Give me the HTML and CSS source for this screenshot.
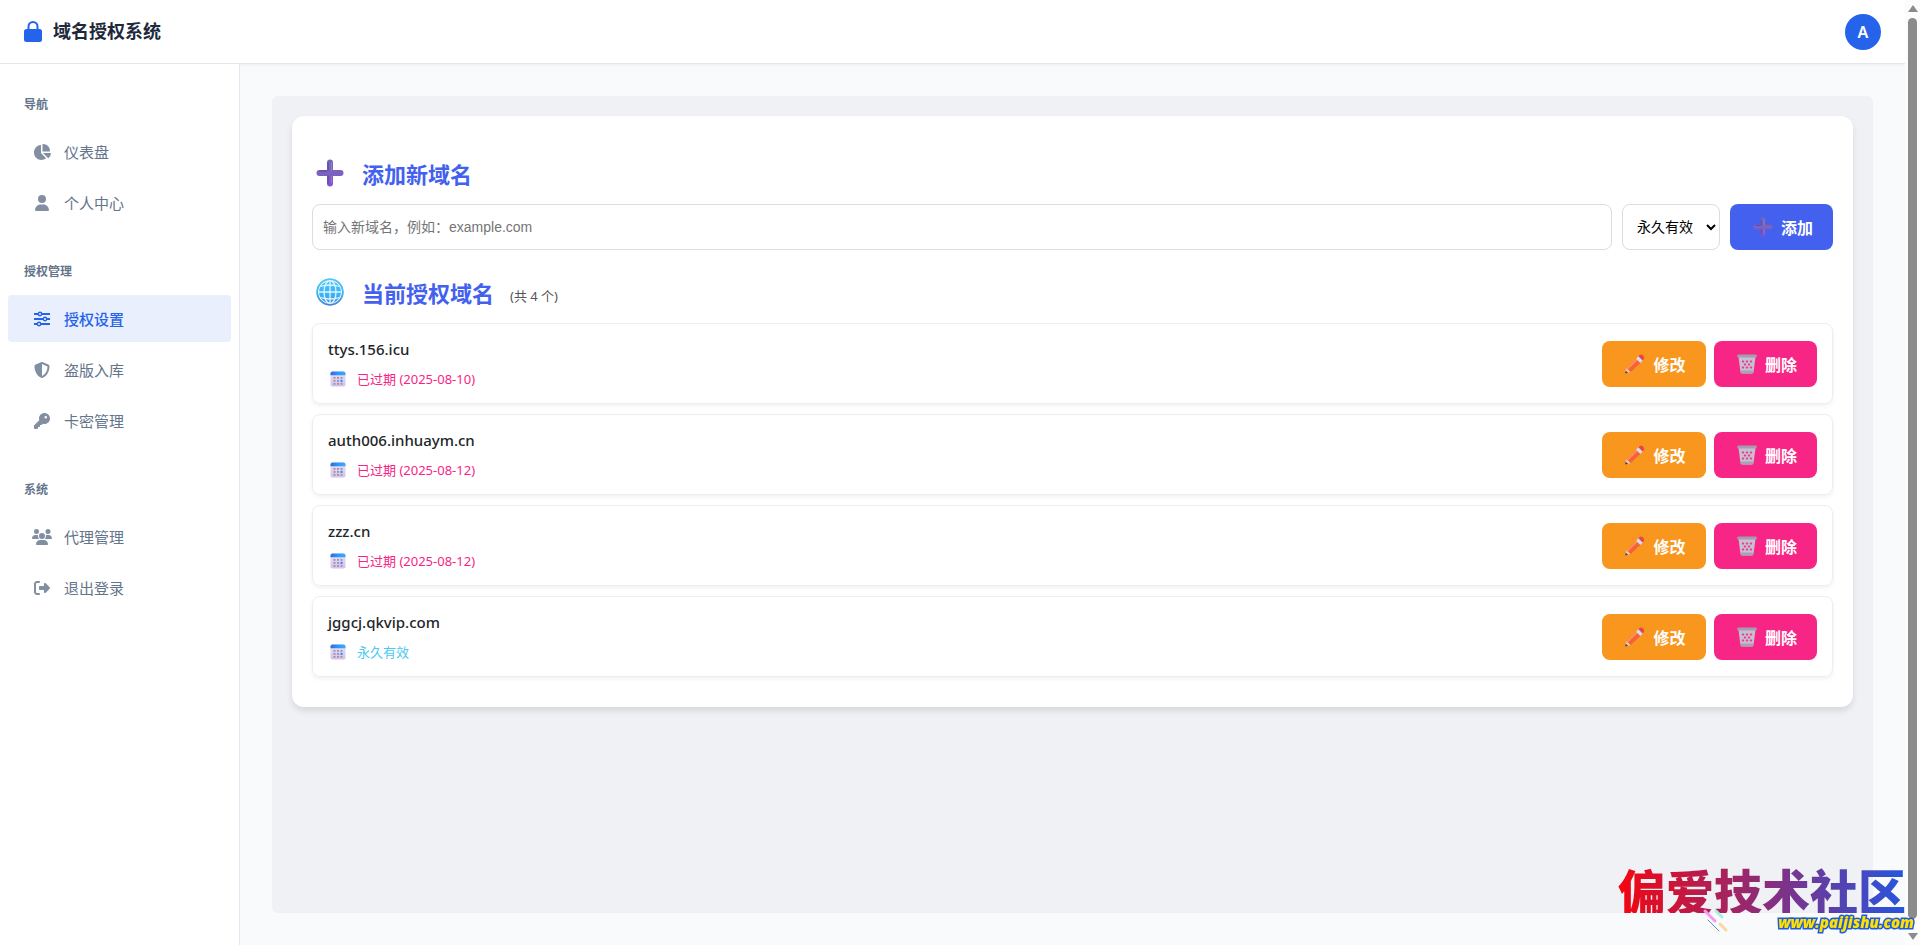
FILE: index.html
```html
<!DOCTYPE html>
<html lang="zh-CN">
<head>
    <meta charset="UTF-8">
    <meta name="viewport" content="width=device-width, initial-scale=1.0">
    <title>域名授权系统</title>
    <link rel="stylesheet" href="styles.css">
</head>
<body>
    <!-- 图标 -->
    <svg class="sprite" aria-hidden="true">
        <defs>
            <linearGradient id="g-plus" x1="0" y1="0" x2="0" y2="1">
                <stop offset="0" stop-color="#7468ae"/>
                <stop offset="0.5" stop-color="#7c62bd"/>
                <stop offset="1" stop-color="#8450d4"/>
            </linearGradient>
            <linearGradient id="g-globe" x1="0" y1="0" x2="0" y2="1">
                <stop offset="0" stop-color="#4fc9fb"/>
                <stop offset="0.6" stop-color="#3db2f5"/>
                <stop offset="1" stop-color="#4a86d4"/>
            </linearGradient>
            <linearGradient id="g-cal" x1="0" y1="0" x2="1" y2="0">
                <stop offset="0" stop-color="#2f6be0"/>
                <stop offset="0.5" stop-color="#2e97fb"/>
                <stop offset="1" stop-color="#35acff"/>
            </linearGradient>
            <linearGradient id="g-page" x1="0" y1="0" x2="0" y2="1">
                <stop offset="0" stop-color="#e9e3f2"/>
                <stop offset="1" stop-color="#d6c0ea"/>
            </linearGradient>
        </defs>
        <symbol id="plus" viewBox="0 0 28 28">
            <path fill="url(#g-plus)" d="M11 3.500a3 3 0 0 1 6 0V11h7.500a3 3 0 0 1 0 6H17v7.500a3 3 0 0 1-6 0V17H3.500a3 3 0 0 1 0-6H11z"/>
            <path fill="none" stroke="#5b3aa0" stroke-opacity=".6" stroke-width="1.500" d="M12 3.500V11.500M12 16.500v8M3.500 12h7.500"/>
            <path fill="none" stroke="#9b8bd0" stroke-opacity=".7" d="M15.500 3v9M15.500 17v7"/>
        </symbol>
        <symbol id="globe" viewBox="0 0 28 28">
            <circle cx="14" cy="14" r="13.500" fill="url(#g-globe)"/>
            <g fill="none" stroke="#dff5ff" stroke-width="1.300">
                <circle cx="14" cy="14" r="11.500"/>
                <ellipse cx="14" cy="14" rx="6" ry="11.500"/>
                <path d="M14 2.500v23M2.500 14h23M4.500 8.500q9.500-3 19 0M4.500 19.500q9.500 3 19 0"/>
            </g>
            <circle cx="14" cy="14" r="12.800" fill="none" stroke="url(#g-globe)" stroke-width="1.600"/>
        </symbol>
        <symbol id="calendar" viewBox="0 0 16 16">
            <rect x="0.500" y="0.500" width="15" height="15" rx="2" fill="url(#g-page)"/>
            <path fill="url(#g-cal)" d="M.5 4.200V2.500a2 2 0 0 1 2-2h11a2 2 0 0 1 2 2v1.700z"/>
            <path fill="#9a93ac" d="M3.500 6h2v1.800h-2zM7 6h2v1.800H7zM10.500 6h2v1.800h-2zM3.500 9h2v1.800h-2zM7 9h2v1.800H7zM3.500 12h2v1.800h-2zM7 12h2v1.800H7zM10.500 12h2v1.800h-2z"/>
            <path fill="#2c8df5" d="M10.500 8.800h2v2.200h-2z"/>
        </symbol>
        <symbol id="pencil" viewBox="0 0 20 20">
            <path fill="#f5c9a0" d="M1.500 14l-1.300 4.500q-.2 1 .8.900L5.700 18z"/>
            <path fill="#5a3b5c" d="M.8 16.700l-.7 2q-.1.900.8.700l2.200-.7z"/>
            <path fill="#f4613c" d="M1.500 14L11.500 4.200l4.300 4.200L5.700 18z"/>
            <path fill="#ff9150" d="M1.500 14L11.500 4.200l1.500 1.500L3 15.500z"/>
            <path fill="#d9d9ef" d="M11 4.700l2.500-2.400 4.300 4.200-2.500 2.400z"/>
            <path fill="#e8464f" d="M13.500 2.300l1.200-1.200q1.600-1.200 3.300.400t.8 3.500l-1.200 1.500z"/>
        </symbol>
        <symbol id="trash" viewBox="0 0 20 20">
            <path fill="#c7c0d3" d="M1.500 3h17l-2 15q-.2 1.500-2 1.500h-9q-1.800 0-2-1.500z"/>
            <path fill="#ee3d90" d="M6 6l1.400 1.500L6 9 4.600 7.500zM10 6l1.400 1.500L10 9 8.600 7.500zM14 6l1.400 1.500L14 9l-1.400-1.500zM8 9l1.400 1.500L8 12l-1.400-1.500zM12 9l1.400 1.500L12 12l-1.400-1.500zM6 12l1.400 1.500L6 15l-1.400-1.500zM10 12l1.400 1.500L10 15l-1.400-1.500zM14 12l1.400 1.500L14 15l-1.400-1.500z"/>
            <rect x="0.200" y="0.500" width="19.600" height="3" rx="1.200" fill="#a59caf"/>
            <path fill="#a9a1b4" d="M3.400 16.500h13.200l-.4 2q-.3 1-1.700 1h-9q-1.400 0-1.700-1z"/>
        </symbol>
        <symbol id="lock" viewBox="0 0 18 21">
            <path fill="none" stroke="currentColor" stroke-width="2" d="M4.500 9V5.500a4.500 4.500 0 0 1 9 0V9"/>
            <rect x="0" y="8" width="18" height="13" rx="2.500" fill="currentColor"/>
        </symbol>
        <symbol id="pie" viewBox="0 0 576 512">
            <path fill="currentColor" d="M304 240V16.600c0-9 7-16.600 16-16.600C443.700 0 544 100.300 544 224c0 9-7.600 16-16.600 16H304zM32 272C32 150.700 122.100 50.300 239 34.300c9.200-1.300 17 6.100 17 15.400V288L412.500 444.500c6.700 6.700 6.200 17.700-1.500 23.100C371.800 495.600 323.800 512 272 512 139.500 512 32 404.600 32 272zm526.400 16c9.300 0 16.600 7.800 15.400 17-7.700 55.900-34.600 105.600-73.900 142.300-6 5.600-15.400 5.200-21.200-.7L320 288h238.400z"/>
        </symbol>
        <symbol id="user" viewBox="0 0 448 512">
            <path fill="currentColor" d="M224 256A128 128 0 1 0 224 0a128 128 0 1 0 0 256zm-45.700 48C79.800 304 0 383.800 0 482.300 0 498.700 13.300 512 29.700 512h388.600c16.400 0 29.700-13.300 29.700-29.700C448 383.800 368.200 304 269.700 304h-91.400z"/>
        </symbol>
        <symbol id="sliders" viewBox="0 0 16 16">
            <g fill="none" stroke="currentColor" stroke-width="1.800">
                <path d="M0 3h4M8 3h8M0 8h9M13 8h3M0 13h3M7 13h9"/>
            </g>
            <g fill="none" stroke="currentColor" stroke-width="1.400">
                <circle cx="6" cy="3" r="1.700"/>
                <circle cx="11" cy="8" r="1.700"/>
                <circle cx="5" cy="13" r="1.700"/>
            </g>
        </symbol>
        <symbol id="shield" viewBox="0 0 512 512">
            <path fill="currentColor" d="M256 0c4.600 0 9.200 1 13.400 2.900l188.300 79.900c22 9.300 38.400 31 38.300 57.200-.5 99.200-41.300 280.700-213.600 363.200-16.700 8-36.100 8-52.800 0C57.300 420.700 16.500 239.200 16 140c-.1-26.200 16.300-47.900 38.300-57.200L242.700 2.900C246.800 1 251.400 0 256 0zm0 66.800v378.100c138-66.800 175.100-214.800 176-303.400L256 66.800z"/>
        </symbol>
        <symbol id="key" viewBox="0 0 512 512">
            <path fill="currentColor" d="M336 352c97.200 0 176-78.800 176-176S433.200 0 336 0 160 78.800 160 176c0 18.700 2.900 36.800 8.300 53.700L7 391c-4.500 4.500-7 10.600-7 17v80c0 13.300 10.700 24 24 24h80c13.300 0 24-10.700 24-24v-40h40c13.300 0 24-10.700 24-24v-40h40c6.400 0 12.500-2.500 17-7l33.300-33.300c16.900 5.400 35 8.300 53.700 8.300zm40-256a40 40 0 1 1 0 80 40 40 0 1 1 0-80z"/>
        </symbol>
        <symbol id="users" viewBox="0 0 640 512">
            <path fill="currentColor" d="M144 0a80 80 0 1 1 0 160A80 80 0 1 1 144 0zm368 0a80 80 0 1 1 0 160 80 80 0 1 1 0-160zM0 298.700C0 239.800 47.800 192 106.700 192h42.700c15.900 0 31 3.500 44.600 9.700-1.300 7.200-1.900 14.700-1.900 22.300 0 38.200 16.800 72.500 43.300 96H21.300C9.600 320 0 310.400 0 298.700zM405.300 320h-.7c26.600-23.500 43.300-57.800 43.300-96 0-7.600-.7-15-1.900-22.300 13.600-6.300 28.700-9.700 44.600-9.700h42.700C592.200 192 640 239.800 640 298.700c0 11.800-9.600 21.300-21.300 21.300H405.300zM224 224a96 96 0 1 1 192 0 96 96 0 1 1-192 0zM128 485.300C128 411.700 187.700 352 261.300 352h117.300C452.300 352 512 411.700 512 485.300c0 14.700-11.900 26.700-26.700 26.700H154.700c-14.700 0-26.700-11.900-26.700-26.700z"/>
        </symbol>
        <symbol id="logout" viewBox="0 0 512 512">
            <path fill="currentColor" d="M377.900 105.900l122.800 122.800c7.200 7.200 11.300 17.100 11.300 27.300s-4.100 20.100-11.300 27.300L377.900 406.100c-6.400 6.400-15 9.900-24 9.900-18.700 0-33.900-15.200-33.900-33.900V320H192c-17.700 0-32-14.300-32-32v-64c0-17.700 14.300-32 32-32h128v-62.100c0-18.700 15.200-33.900 33.900-33.900 9 0 17.600 3.600 24 9.900zM160 96H96c-17.700 0-32 14.300-32 32v256c0 17.700 14.300 32 32 32h64c17.700 0 32 14.300 32 32s-14.300 32-32 32H96c-53 0-96-43-96-96V128c0-53 43-96 96-96h64c17.700 0 32 14.300 32 32s-14.300 32-32 32z"/>
        </symbol>
    </svg>

    <div class="app">
        <header class="header">
            <a href="#" class="logo">
                <svg class="logo-icon"><use href="#lock"/></svg>
                <span>域名授权系统</span>
            </a>
            <button type="button" class="avatar">A</button>
        </header>

        <div class="main">
            <nav class="sidebar">
                <div class="nav-section">
                    <div class="nav-title">导航</div>
                    <a href="#" class="nav-item"><svg class="nav-icon"><use href="#pie"/></svg>仪表盘</a>
                    <a href="#" class="nav-item"><svg class="nav-icon"><use href="#user"/></svg>个人中心</a>
                </div>
                <div class="nav-section">
                    <div class="nav-title">授权管理</div>
                    <a href="#" class="nav-item active"><svg class="nav-icon"><use href="#sliders"/></svg>授权设置</a>
                    <a href="#" class="nav-item"><svg class="nav-icon"><use href="#shield"/></svg>盗版入库</a>
                    <a href="#" class="nav-item"><svg class="nav-icon"><use href="#key"/></svg>卡密管理</a>
                </div>
                <div class="nav-section">
                    <div class="nav-title">系统</div>
                    <a href="#" class="nav-item"><svg class="nav-icon"><use href="#users"/></svg>代理管理</a>
                    <a href="#" class="nav-item"><svg class="nav-icon"><use href="#logout"/></svg>退出登录</a>
                </div>
            </nav>

            <main class="content">
                <div class="panel">
                    <div class="card">
                        <h2><svg class="title-icon"><use href="#plus"/></svg>添加新域名</h2>
                        <form class="add-form">
                            <input type="text" class="domain-input" name="domain" aria-label="新域名" placeholder="输入新域名，例如：example.com">
                            <select class="expire-select" name="expire" aria-label="有效期">
                                <option>永久有效</option>
                            </select>
                            <button type="submit" class="btn btn-primary"><svg class="btn-icon"><use href="#plus"/></svg>添加</button>
                        </form>

                        <h2><svg class="title-icon"><use href="#globe"/></svg>当前授权域名 <small>(共 4 个)</small></h2>
                        <ul class="domain-list">
                            <li class="domain-item">
                                <div class="domain-info">
                                    <div class="domain-name">ttys.156.icu</div>
                                    <div class="domain-status expired"><svg class="status-icon"><use href="#calendar"/></svg>已过期 (2025-08-10)</div>
                                </div>
                                <button type="button" class="btn btn-edit"><svg class="btn-icon"><use href="#pencil"/></svg>修改</button>
                                <button type="button" class="btn btn-delete"><svg class="btn-icon"><use href="#trash"/></svg>删除</button>
                            </li>
                            <li class="domain-item">
                                <div class="domain-info">
                                    <div class="domain-name">auth006.inhuaym.cn</div>
                                    <div class="domain-status expired"><svg class="status-icon"><use href="#calendar"/></svg>已过期 (2025-08-12)</div>
                                </div>
                                <button type="button" class="btn btn-edit"><svg class="btn-icon"><use href="#pencil"/></svg>修改</button>
                                <button type="button" class="btn btn-delete"><svg class="btn-icon"><use href="#trash"/></svg>删除</button>
                            </li>
                            <li class="domain-item">
                                <div class="domain-info">
                                    <div class="domain-name">zzz.cn</div>
                                    <div class="domain-status expired"><svg class="status-icon"><use href="#calendar"/></svg>已过期 (2025-08-12)</div>
                                </div>
                                <button type="button" class="btn btn-edit"><svg class="btn-icon"><use href="#pencil"/></svg>修改</button>
                                <button type="button" class="btn btn-delete"><svg class="btn-icon"><use href="#trash"/></svg>删除</button>
                            </li>
                            <li class="domain-item">
                                <div class="domain-info">
                                    <div class="domain-name">jggcj.qkvip.com</div>
                                    <div class="domain-status forever"><svg class="status-icon"><use href="#calendar"/></svg>永久有效</div>
                                </div>
                                <button type="button" class="btn btn-edit"><svg class="btn-icon"><use href="#pencil"/></svg>修改</button>
                                <button type="button" class="btn btn-delete"><svg class="btn-icon"><use href="#trash"/></svg>删除</button>
                            </li>
                        </ul>
                    </div>
                </div>
            </main>
        </div>
    </div>

    <!-- 滚动条 -->
    <div class="scrollbar" aria-hidden="true">
        <span class="arrow-up"></span>
        <span class="thumb"></span>
        <span class="arrow-down"></span>
    </div>

    <!-- 水印 -->
    <div class="watermark">
        <div class="watermark-name">偏爱技术社区</div>
        <div class="watermark-row">
            <svg class="watermark-lines" viewBox="0 0 28 28" aria-hidden="true">
                <g fill="none" stroke-linecap="round">
                    <path stroke="#f59af0" stroke-width="3" d="M3 3l10 10"/>
                    <path stroke="#a5f0e0" stroke-width="3" d="M14 3l6 6"/>
                    <path stroke="#5b8be0" stroke-width="1" d="M6 12l11 11"/>
                    <path stroke="#fad9a0" stroke-width="3" d="M18 16l6 6"/>
                    <path stroke="#fbe9c4" stroke-width="1" d="M8 18l9 8"/>
                </g>
            </svg>
            <span class="watermark-url">www.paijishu.com</span>
        </div>
    </div>
</body>
</html>
```

FILE: styles.css
```css
* {
    box-sizing: border-box;
}
body {
    margin: 0;
    display: flex;
    min-height: 100vh;
    font-family: "Noto Sans", "Noto Sans CJK SC", sans-serif;
    font-size: 15px;
    color: #1e293b;
    background: #f8fafc;
}
a {
    color: inherit;
    text-decoration: none;
}
.sprite {
    position: absolute;
    width: 0;
    height: 0;
}
.app {
    flex: 1;
    display: flex;
    flex-direction: column;
}

/* header */
.header {
    display: flex;
    align-items: center;
    justify-content: space-between;
    height: 64px;
    padding: 0 24px;
    background: #fff;
    border-bottom: 1px solid #e2e8f0;
    box-shadow: 0 1px 3px rgba(0, 0, 0, 0.05);
}
.logo {
    display: flex;
    align-items: center;
    gap: 11px;
    font-size: 18px;
    line-height: 24px;
    font-weight: 600;
}
.logo span {
    padding-bottom: 2px;
}
.logo-icon {
    width: 18px;
    height: 21px;
    color: #2563eb;
}
.avatar {
    width: 36px;
    height: 36px;
    padding: 0;
    border: none;
    border-radius: 50%;
    background: #2563eb;
    color: #fff;
    font-family: inherit;
    font-size: 16px;
    font-weight: 600;
}

/* sidebar */
.main {
    flex: 1;
    display: flex;
}
.sidebar {
    width: 240px;
    padding: 24px 8px;
    background: #fff;
    border-right: 1px solid #e2e8f0;
}
.nav-section {
    margin-bottom: 29px;
}
.nav-title {
    padding: 8px 16px;
    margin-bottom: 7px;
    font-size: 12px;
    line-height: 17px;
    font-weight: 600;
    color: #64748b;
}
.nav-item {
    display: flex;
    align-items: center;
    gap: 12px;
    height: 47px;
    padding: 0 24px;
    margin-bottom: 4px;
    border-radius: 4px;
    color: #64748b;
}
.nav-icon {
    width: 20px;
    height: 16px;
    opacity: 0.8;
}
.nav-item.active {
    background: #e9effd;
    color: #2563eb;
    font-weight: 500;
}
.nav-item.active .nav-icon {
    opacity: 1;
}

/* content */
.content {
    flex: 1;
    display: flex;
    padding: 32px;
}
.panel {
    flex: 1;
    padding: 20px;
    border-radius: 6px;
    background: #f0f1f5;
}
.card {
    padding: 20px 20px 30px;
    border-radius: 12px;
    background: #fff;
    box-shadow: 0 4px 6px rgba(0, 0, 0, 0.1);
}
h2 {
    display: flex;
    align-items: center;
    height: 30px;
    margin: 22px 0 16px;
    font-size: 22px;
    color: #4361ee;
}
h2 small {
    margin-left: 16px;
    padding-top: 6px;
    font-size: 13px;
    font-weight: 400;
    color: #555;
}
.title-icon {
    width: 28px;
    height: 28px;
    margin: 0 18px 0 4px;
}
.add-form {
    display: flex;
    gap: 10px;
    margin-bottom: 27px;
}
.domain-input,
.expire-select {
    height: 46px;
    border: 1px solid #ddd;
    border-radius: 8px;
    background: #fff;
    font-family: "Liberation Sans", "Noto Sans CJK SC", sans-serif;
    font-size: 14px;
}
.domain-input {
    flex: 1;
    padding: 0 10px;
}
.domain-input::placeholder {
    color: #757575;
}
.expire-select {
    width: 98px;
    padding: 0 0 0 10px;
    color: #000;
}
.btn {
    display: flex;
    align-items: center;
    justify-content: center;
    gap: 8px;
    width: 103px;
    height: 46px;
    padding: 0 0 0 3px;
    border: none;
    border-radius: 8px;
    color: #fff;
    font-family: inherit;
    font-size: 16px;
    font-weight: 600;
    cursor: pointer;
}
.btn-icon {
    width: 20px;
    height: 20px;
}
.btn-primary {
    background: #4361ee;
}
.btn-edit {
    width: 104px;
    background: #f8961e;
}
.btn-delete {
    background: #f72585;
}

/* domains */
.domain-list {
    margin: 0;
    padding: 0;
    list-style: none;
}
.domain-item {
    display: flex;
    align-items: center;
    gap: 8px;
    height: 81px;
    padding: 0 15px;
    margin-bottom: 10px;
    border: 1px solid #eee;
    border-radius: 8px;
    box-shadow: 0 2px 4px rgba(0, 0, 0, 0.06);
}
.domain-list .domain-item:last-child {
    margin-bottom: 0;
}
.domain-info {
    flex: 1;
}
.domain-name {
    margin-bottom: 8px;
    font-size: 15px;
    line-height: 22px;
    font-weight: 500;
    color: #212529;
}
.domain-status {
    display: flex;
    align-items: center;
    gap: 11px;
    font-size: 13px;
    line-height: 22px;
}
.status-icon {
    width: 16px;
    height: 16px;
    margin-left: 2px;
}
.expired {
    color: #f72585;
}
.forever {
    color: #4cc9f0;
}

/* scrollbar */
.scrollbar {
    display: flex;
    flex-direction: column;
    align-items: center;
    gap: 6px;
    width: 15px;
    height: 100vh;
    padding: 5px 0;
    background: #fcfcfc;
}
.thumb {
    flex: 1;
    width: 9px;
    border-radius: 5px;
    background: #8b8b8b;
}
.arrow-up,
.arrow-down {
    border: 5px solid transparent;
}
.arrow-up {
    border-top: 0;
    border-bottom: 7px solid #8b8b8b;
}
.arrow-down {
    border-bottom: 0;
    border-top: 7px solid #8b8b8b;
}
.scrollbar .thumb {
    margin-bottom: 8px;
}

/* watermark */
.watermark {
    position: fixed;
    right: 6px;
    bottom: 14px;
    width: 296px;
    pointer-events: none;
}
.watermark-name {
    font-family: "Noto Sans CJK SC", sans-serif;
    font-size: 48px;
    line-height: 48px;
    font-weight: 900;
    color: transparent;
    background: linear-gradient(90deg, #f5050f, #8a2d7c 50%, #1f58e6);
    -webkit-background-clip: text;
    background-clip: text;
}
.watermark-row {
    display: flex;
    align-items: center;
    justify-content: space-between;
    height: 18px;
    padding-left: 84px;
}
.watermark-lines {
    width: 28px;
    height: 28px;
}
.watermark-url {
    font-family: "Open Sans", sans-serif;
    font-size: 15px;
    line-height: 18px;
    font-style: italic;
    font-weight: 800;
    color: #ffe100;
    -webkit-text-stroke: 3px #1f5be0;
    paint-order: stroke fill;
}
```
